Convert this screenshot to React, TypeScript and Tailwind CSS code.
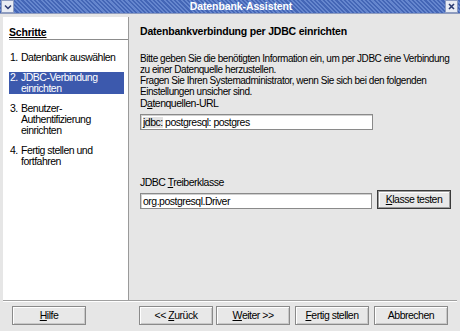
const steps = [
  { n: '1.', lines: ['Datenbank auswählen'] },
  { n: '2.', lines: ['JDBC-Verbindung', 'einrichten'], active: true },
  { n: '3.', lines: ['Benutzer-', 'Authentifizierung', 'einrichten'] },
  { n: '4.', lines: ['Fertig stellen und', 'fortfahren'] },
];

function Btn({ children, className = '' }: { children: React.ReactNode; className?: string }) {
  return (
    <div
      className={
        'flex h-[19px] w-[74px] shrink-0 items-center justify-center whitespace-nowrap border border-[#8a8a8a] bg-[#e8e8e8] shadow-[inset_1px_1px_0_#ffffff,inset_-1px_-1px_0_#c8c8c8] ' +
        className
      }
    >
      {children}
    </div>
  );
}

export default function App() {
  return (
    <div className="flex h-[331px] w-[460px] flex-col overflow-hidden bg-[#e6e6e6] font-['Liberation_Sans',Arial,sans-serif] text-[10.5px] leading-[11px] tracking-[-0.5px] text-black">
      {/* title bar */}
      <div className="relative flex h-[14px] items-center justify-center border-b border-[#8e9bbd] bg-[repeating-linear-gradient(45deg,#4466b6_0px,#4466b6_1.5px,#6586ce_1.5px,#6586ce_3px)] pl-[22px]">
        <div className="absolute left-[1px] top-[0px] flex h-[13px] w-[13px] items-center justify-center border border-[#8d9cc0] bg-[#e8ecf4]">
          <svg width="8" height="6" viewBox="0 0 8 6">
            <path d="M1 1.5 L4 4.5 L7 1.5" stroke="#2a3a70" strokeWidth="1.5" fill="none" />
          </svg>
        </div>
        <span className="font-bold tracking-[-0.1px] text-white">Datenbank-Assistent</span>
        <div className="absolute right-[2px] top-[0px] flex h-[13px] w-[13px] items-center justify-center border border-[#8d9cc0] bg-[#e8ecf4]">
          <svg width="7" height="7" viewBox="0 0 7 7">
            <path d="M1 1 L6 6 M6 1 L1 6" stroke="#2a3a70" strokeWidth="1.6" />
          </svg>
        </div>
      </div>

      {/* main */}
      <div className="flex flex-1 px-[3px] pt-[3px]">
        <div className="w-[126px] shrink-0 border-r border-[#9a9a9a] bg-white pl-[6px] pt-[10px]">
          <div className="border-b border-[#8c8c8c] pb-[0.5px] font-bold tracking-[-0.2px] underline">
            Schritte
          </div>
          <div className="mt-[12px] flex flex-col gap-[9px] pr-[4px]">
            {steps.map((s) => (
              <div
                key={s.n}
                className={'flex whitespace-nowrap ' + (s.active ? 'bg-[#3c59ad] text-white' : '')}
              >
                <span className="w-[12px] shrink-0 pl-[1px]">{s.n}</span>
                <div className="flex flex-col">
                  {s.lines.map((l) => (
                    <span key={l}>{l}</span>
                  ))}
                </div>
              </div>
            ))}
          </div>
        </div>
        <div className="min-w-0 flex-1 whitespace-nowrap pl-[11px] pt-[9px]">
          <div className="font-bold tracking-[-0.2px]">Datenbankverbindung per JDBC einrichten</div>
          <p className="mt-[16px] text-[10px] tracking-[-0.45px]">
            Bitte geben Sie die benötigten Information ein, um per JDBC eine Verbindung
            <br />
            zu einer Datenquelle herzustellen.
            <br />
            Fragen Sie Ihren Systemadministrator, wenn Sie sich bei den folgenden
            <br />
            Einstellungen unsicher sind.
          </p>
          <div className="mt-[1px]">
            D<span className="underline">a</span>tenquellen-URL
          </div>
          <div className="mt-[5px] flex h-[16px] w-[233px] items-center border border-[#8a8a8a] bg-white pl-[2px] shadow-[inset_1px_1px_0_#d0d0d0]">
            <span className="bg-[#e2e2e2]">jdbc:</span>
            <span>&nbsp;postgresql: postgres</span>
          </div>
          <div className="mt-[47px]">
            JDBC <span className="underline">T</span>reiberklasse
          </div>
          <div className="mt-[2px] flex items-end gap-[5px]">
            <div className="flex h-[16px] w-[232px] shrink-0 items-center border border-[#8a8a8a] bg-white pl-[2px] shadow-[inset_1px_1px_0_#d0d0d0]">
              org.postgresql.Driver
            </div>
            <div className="flex h-[19px] w-[74px] shrink-0 border border-[#3a3a3a]">
              <div className="flex flex-1 items-center justify-center border border-[#9a9a9a] bg-[#e8e8e8] shadow-[inset_1px_1px_0_#ffffff]">
                <span className="underline">K</span>lasse testen
              </div>
            </div>
          </div>
        </div>
      </div>

      {/* footer */}
      <div className="mx-[3px] flex h-[31px] items-start border-t border-[#a0a0a0] pl-[9px] pr-[9px] pt-[5px] shadow-[inset_0_1px_0_#ffffff]">
        <Btn>
          <span className="underline">H</span>ilfe
        </Btn>
        <div className="ml-auto flex">
          <Btn>
            &lt;&lt;&nbsp;<span className="underline">Z</span>urück
          </Btn>
          <Btn className="ml-[3px]">
            <span className="underline">W</span>eiter &gt;&gt;
          </Btn>
          <Btn className="ml-[5px]">
            <span className="underline">F</span>ertig stellen
          </Btn>
          <Btn className="ml-[5px]">Abbrechen</Btn>
        </div>
      </div>
    </div>
  );
}
